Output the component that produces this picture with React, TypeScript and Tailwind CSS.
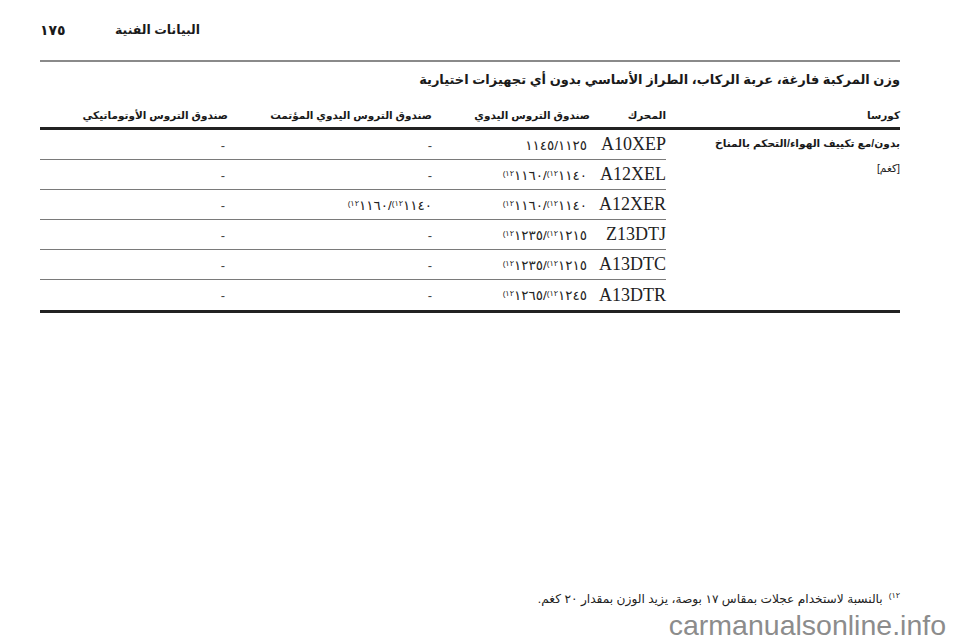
const rows = [
  { engine: 'A10XEP', manual: [null, '١١٤٥/١١٢٥'], auto: '-', automatic: '-' },
  { engine: 'A12XEL', manual: ['١١٦٠/', '١١٤٠'], auto: '-', automatic: '-' },
  { engine: 'A12XER', manual: ['١١٦٠/', '١١٤٠'], auto: ['١١٦٠/', '١١٤٠'], automatic: '-' },
  { engine: 'Z13DTJ', manual: ['١٢٣٥/', '١٢١٥'], auto: '-', automatic: '-' },
  { engine: 'A13DTC', manual: ['١٢٣٥/', '١٢١٥'], auto: '-', automatic: '-' },
  { engine: 'A13DTR', manual: ['١٢٦٥/', '١٢٤٥'], auto: '-', automatic: '-' },
]

const arabic = "font-['Liberation_Sans','DejaVu_Sans',sans-serif]"
const serif = "font-['Liberation_Serif','DejaVu_Serif',serif]"

// footnote marker, drawn small and raised as in the print
function Note() {
  return <sup className="text-[8px] leading-none tracking-[0.5px]">(١٢</sup>
}

function Weight({ value }: { value: string | (string | null)[] }) {
  if (typeof value === 'string') {
    return <span className="text-[13px] text-[#444]">{value}</span>
  }
  const [a, b] = value
  // written in visual order, so force left-to-right
  return (
    <span dir="ltr" className="text-[13.5px] tracking-[2px] text-[#222] [unicode-bidi:bidi-override]">
      {a !== null && <Note />}
      {a}
      {a !== null && <Note />}
      {b}
    </span>
  )
}

export default function App() {
  return (
    <div className={`w-[960px] h-[642px] bg-white text-[#1a1a1a] flex flex-col ${arabic}`}>
      {/* Page header */}
      <div className="flex items-center pl-[40px] pt-[17px] h-[44px]">
        <span className="text-[14px] font-bold w-[75px]">١٧٥</span>
        <span dir="rtl" className="text-[12.5px] font-bold">البيانات الفنية</span>
      </div>

      <div className="mx-[40px] mt-[16px] w-[860px] h-[2px] bg-[#8a8a8a]" />

      <div dir="rtl" className="w-[860px] ml-[40px]">
        <h2 className="text-[13px] font-bold mt-[6px] h-[24px] leading-[24px]">
          وزن المركبة فارغة، عربة الركاب، الطراز الأساسي بدون أي تجهيزات اختيارية
        </h2>

        {/* Column headings */}
        <div className="grid grid-cols-[234px_76px_158px_204px_188px] text-[10.5px] font-bold mt-[14px] h-[20px] items-center">
          <span>كورسا</span>
          <span>المحرك</span>
          <span>صندوق التروس اليدوي</span>
          <span>صندوق التروس اليدوي المؤتمت</span>
          <span>صندوق التروس الأوتوماتيكي</span>
        </div>

        <div className="h-[3px] bg-[#222] mt-[1px]" />

        <div className="flex">
          <div className="w-[234px] pt-[4px] text-[10.6px] font-bold leading-[18px]">
            <div>بدون/مع تكييف الهواء/التحكم بالمناخ</div>
            <div className="font-normal mt-[7px]">[كغم]</div>
          </div>
          <div className="flex-1">
            {rows.map((r, i) => (
              <div
                key={r.engine}
                className={`grid grid-cols-[76px_158px_204px_188px] h-[30px] items-center ${
                  i < rows.length - 1 ? 'border-b border-[#7a7a7a]' : ''
                }`}
              >
                <span className={`${serif} text-[18px] text-[#222]`}>{r.engine}</span>
                <span className="pr-[3px]">
                  <Weight value={r.manual} />
                </span>
                <span>
                  <Weight value={r.auto} />
                </span>
                <span className="pr-[3px]">
                  <Weight value={r.automatic} />
                </span>
              </div>
            ))}
          </div>
        </div>

        <div className="h-[3px] bg-[#222]" />
      </div>

      <div className="flex-1" />

      {/* Footnote */}
      <div dir="rtl" className="w-[860px] ml-[40px] text-[12.2px] text-[#222] mb-[2px]">
        <span className="text-[8px] align-super">١٢)</span>
        <span className="mr-[6px]">بالنسبة لاستخدام عجلات بمقاس ١٧ بوصة، يزيد الوزن بمقدار ٢٠ كغم.</span>
      </div>

      {/* Watermark */}
      <div className="flex justify-end pr-[14px] h-[32px] items-start">
        <span className="text-[28.5px] leading-[30px] text-[#8c8c8c] font-['Liberation_Sans',sans-serif]">
          carmanualsonline.info
        </span>
      </div>
    </div>
  )
}
